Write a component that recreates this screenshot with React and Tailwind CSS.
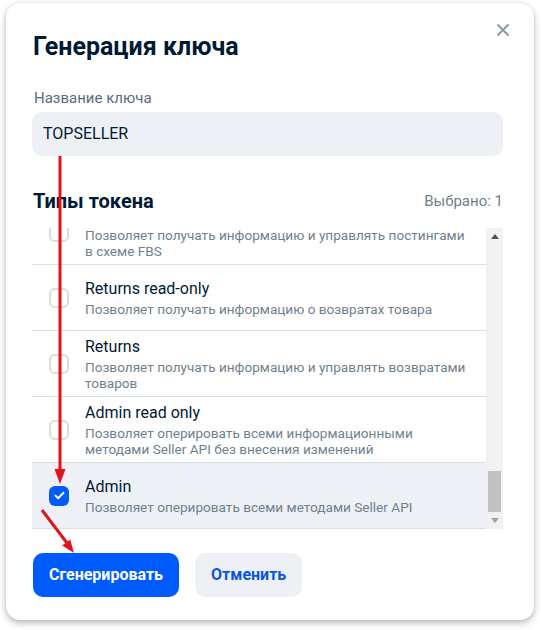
import React from "react";

const items = [
  { title: "", lines: ["Позволяет получать информацию и управлять постингами", "в схеме FBS"] },
  { title: "Returns read-only", lines: ["Позволяет получать информацию о возвратах товара"] },
  { title: "Returns", lines: ["Позволяет получать информацию и управлять возвратами", "товаров"] },
  { title: "Admin read only", lines: ["Позволяет оперировать всеми информационными", "методами Seller API без внесения изменений"] },
  { title: "Admin", lines: ["Позволяет оперировать всеми методами Seller API"], checked: true },
];

function Checkbox({ checked }) {
  if (checked) {
    return (
      <div className="w-[20px] h-[20px] shrink-0 rounded-[6px] bg-[#005bff] flex items-center justify-center">
        <svg width="11" height="9" viewBox="0 0 11 9" fill="none">
          <path d="M1.5 4.6 L4.2 7.2 L9.5 1.8" stroke="white" strokeWidth="2" strokeLinecap="round" strokeLinejoin="round" />
        </svg>
      </div>
    );
  }
  return <div className="w-[20px] h-[20px] shrink-0 rounded-[6px] border-2 border-[#d5dde6] bg-white" />;
}

function Item({ item }) {
  return (
    <div className={`h-[66px] border-b border-[#d7dee6] flex items-center pl-[17px] gap-[16px] ${item.checked ? "bg-[#edf1f6]" : "bg-white"}`}>
      <Checkbox checked={item.checked} />
      <div className="flex flex-col whitespace-nowrap">
        <div className="h-[20px] text-[16px] leading-[20px] text-[#001a34]">{item.title}</div>
        <div className="mt-[2px] text-[13.6px] leading-[16px] text-[#707f8d]">
          {item.lines.map((l, i) => (
            <div key={i}>{l}</div>
          ))}
        </div>
      </div>
    </div>
  );
}

export default function App() {
  return (
    <div className="relative w-[541px] h-[630px] bg-white overflow-hidden" style={{ fontFamily: "Roboto, 'Noto Sans', sans-serif" }}>
      <div className="pt-[3px] pl-[6px]">
        <div className="relative w-[528px] h-[617px] bg-white rounded-[14px] shadow-[0_3px_7px_rgba(0,0,0,0.28),0_0_2px_rgba(0,0,0,0.12)] pt-[30px] pl-[26px] pb-[23px]">
          <button className="absolute top-[21px] right-[25px] w-[12px] h-[12px] flex items-center justify-center">
            <svg width="12" height="12" viewBox="0 0 12 12" fill="none">
              <path d="M1 1 L11 11 M11 1 L1 11" stroke="#8a97a4" strokeWidth="1.8" strokeLinecap="round" />
            </svg>
          </button>
          <div className="w-[471px] flex flex-col">
            <h1 className="text-[25px] leading-[28px] font-bold text-[#001a34] pl-[1px]">Генерация ключа</h1>
            <div className="mt-[27px] text-[15px] leading-[20px] text-[#5c6b79] pl-[2px]">Название ключа</div>
            <div className="mt-[4px] h-[44px] rounded-[10px] bg-[#edf1f6] flex items-center pl-[11px] text-[16px] text-[#001a34]">TOPSELLER</div>
            <div className="mt-[33px] flex items-center justify-between h-[24px]">
              <div className="text-[20px] leading-[24px] font-bold text-[#001a34] pl-[1px]">Типы токена</div>
              <div className="text-[15px] text-[#707f8d]">Выбрано: 1</div>
            </div>
            <div className="mt-[15px] h-[301px] flex">
              <div className="flex-1 overflow-hidden">
                <div className="mt-[-29px]">
                  {items.map((it, i) => (
                    <Item key={i} item={it} />
                  ))}
                </div>
              </div>
              <div className="w-[17px] bg-[#f1f1f1] flex flex-col">
                <div className="h-[17px] flex items-center justify-center">
                  <svg width="8" height="5" viewBox="0 0 8 5"><path d="M0 5 L4 0 L8 5 Z" fill="#505050" /></svg>
                </div>
                <div className="flex-1 flex flex-col justify-end items-center">
                  <div className="w-[13px] h-[41px] bg-[#c1c1c1]" />
                </div>
                <div className="h-[17px] flex items-center justify-center">
                  <svg width="8" height="5" viewBox="0 0 8 5"><path d="M0 0 L8 0 L4 5 Z" fill="#a3a3a3" /></svg>
                </div>
              </div>
            </div>
            <div className="mt-[24px] flex gap-[16px] pl-[1px]">
              <button className="h-[44px] px-[16px] rounded-[10px] bg-[#005bff] text-white text-[16px] font-bold">Сгенерировать</button>
              <button className="h-[44px] px-[16px] rounded-[10px] bg-[#edf1f6] text-[#0a55e0] text-[16px] font-bold">Отменить</button>
            </div>
          </div>
        </div>
      </div>
      <svg className="absolute inset-0 pointer-events-none" width="541" height="630" viewBox="0 0 541 630">
        <line x1="60" y1="156" x2="60" y2="470" stroke="#e3121b" strokeWidth="3" />
        <polygon points="54.5,469 65.5,469 60,484" fill="#e3121b" />
        <line x1="42" y1="510" x2="67" y2="543" stroke="#e3121b" strokeWidth="3" />
        <polygon points="62.2,545.6 70.2,539.6 74,553" fill="#e3121b" />
      </svg>
    </div>
  );
}
